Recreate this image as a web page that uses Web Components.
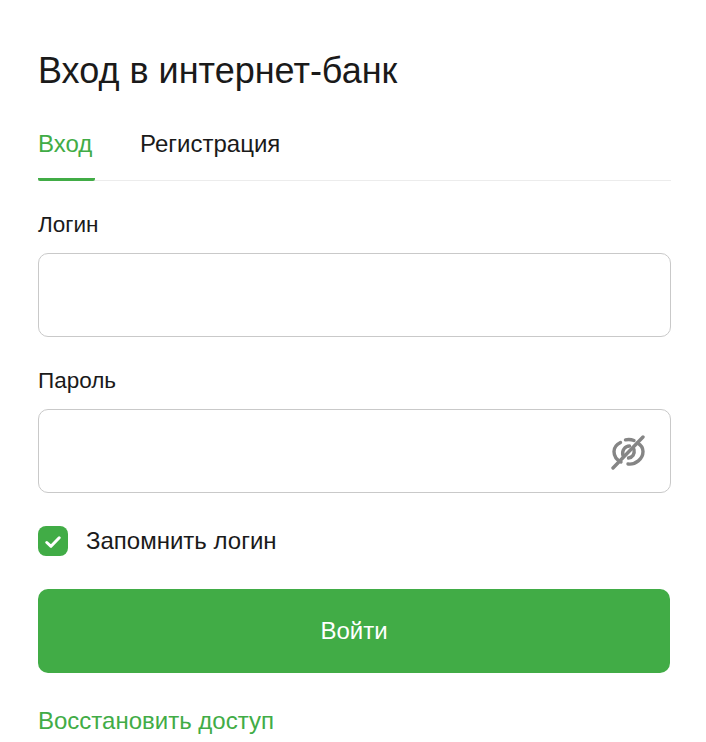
<!DOCTYPE html>
<html lang="ru">
<head>
<meta charset="utf-8">
<title>Вход в интернет-банк</title>
<style>
  html, body { margin: 0; background: #fff; }
  body { font-family: "Liberation Sans", Arial, sans-serif; color: #1a1a1a; overflow: hidden; }
</style>
</head>
<body>
<login-form></login-form>

<script>
// Text field with a label above it, extra content goes to the slot on the right
class FormField extends HTMLElement {
  constructor() {
    super();
    this.attachShadow({ mode: 'open' });
  }

  connectedCallback() {
    const label = this.getAttribute('label') || '';
    this.shadowRoot.innerHTML = `
      <style>
        :host { display: block; }
        label { display: block; font-size: 22.5px; line-height: 28px; color: #1a1a1a; margin-bottom: 14px; }
        .box {
          height: 82px;
          border: 1px solid #c9c9c9;
          border-radius: 10px;
          display: flex;
          align-items: center;
          justify-content: flex-end;
          padding: 0 24px;
        }
      </style>
      <label>${label}</label>
      <div class="box"><slot></slot></div>
    `;
  }
}
customElements.define('form-field', FormField);

class EyeOff extends HTMLElement {
  constructor() {
    super();
    this.attachShadow({ mode: 'open' });
    this.shadowRoot.innerHTML = `
      <style>:host { display: block; width: 36px; height: 36px; margin-top: 2px; } svg { display: block; }</style>
      <svg width="36" height="36" viewBox="0 0 36 36" fill="none" stroke="#858585" stroke-width="3.400" stroke-linecap="round">
        <path d="M10.500 8.500C6.500 10.500 4 14 4 17.500C4 22 7 26 11 28"/>
        <path d="M15.500 5.800C18.500 5.200 21.500 5.500 24 6.500"/>
        <path d="M27.500 9C31 11 33 14 33 17.500C33 25 25.500 31 18 30"/>
        <path d="M13 21.500C11.500 16.500 15 12 19.500 12"/>
        <path d="M24 15.500C25 20 22.500 23.500 18.500 24"/>
        <path d="M3 34L33 3"/>
      </svg>
    `;
  }
}
customElements.define('eye-off', EyeOff);

class CheckBox extends HTMLElement {
  constructor() {
    super();
    this.attachShadow({ mode: 'open' });
    this.shadowRoot.innerHTML = `
      <style>
        :host { display: flex; align-items: center; gap: 18px; font-size: 24px; line-height: 30px; color: #1a1a1a; }
        .mark { width: 30px; height: 30px; border-radius: 8px; background: #41ac46; display: flex; align-items: center; justify-content: center; }
        svg { display: block; margin-top: 2px; }
      </style>
      <span class="mark">
        <svg width="16" height="12" viewBox="0 0 16 12" fill="none" stroke="#fff" stroke-width="3" stroke-linecap="round" stroke-linejoin="round"><path d="M1.800 6.500L6 10.300L14.200 1.800"/></svg>
      </span>
      <span><slot></slot></span>
    `;
  }
}
customElements.define('check-box', CheckBox);

class LoginForm extends HTMLElement {
  constructor() {
    super();
    this.attachShadow({ mode: 'open' });
    this.shadowRoot.innerHTML = `
      <style>
        :host { display: block; padding: 49px 35px 0 38px; }
        h1 { margin: 0; font-size: 36px; line-height: 44px; font-weight: 400; color: #1a1a1a; }
        .tabs { display: flex; gap: 45px; margin-top: 37px; border-bottom: 1px solid #ececec; height: 50px; }
        .tab { font-size: 24px; line-height: 28px; color: #1a1a1a; height: 50px; box-sizing: border-box; }
        .tab.active { color: #41ac46; width: 57px; border-bottom: 3px solid #41ac46; border-radius: 0 0 2px 2px; margin-bottom: -1px; height: 51px; }
        form-field { margin-top: 30px; }
        form-field + form-field { margin-top: 30px; }
        check-box { margin-top: 33px; }
        .submit {
          margin-top: 33px;
          width: 632px;
          height: 84px;
          border-radius: 10px;
          background: #41ac46;
          color: #fff;
          font-size: 24px;
          display: flex;
          align-items: center;
          justify-content: center;
        }
        .restore { display: block; margin-top: 34px; font-size: 24px; line-height: 28px; color: #41ac46; text-decoration: none; }
      </style>
      <h1>Вход в интернет-банк</h1>
      <div class="tabs">
        <span class="tab active">Вход</span>
        <span class="tab">Регистрация</span>
      </div>
      <form-field label="Логин"></form-field>
      <form-field label="Пароль"><eye-off></eye-off></form-field>
      <check-box>Запомнить логин</check-box>
      <div class="submit">Войти</div>
      <a class="restore" href="#">Восстановить доступ</a>
    `;
  }
}
customElements.define('login-form', LoginForm);
</script>
</body>
</html>
